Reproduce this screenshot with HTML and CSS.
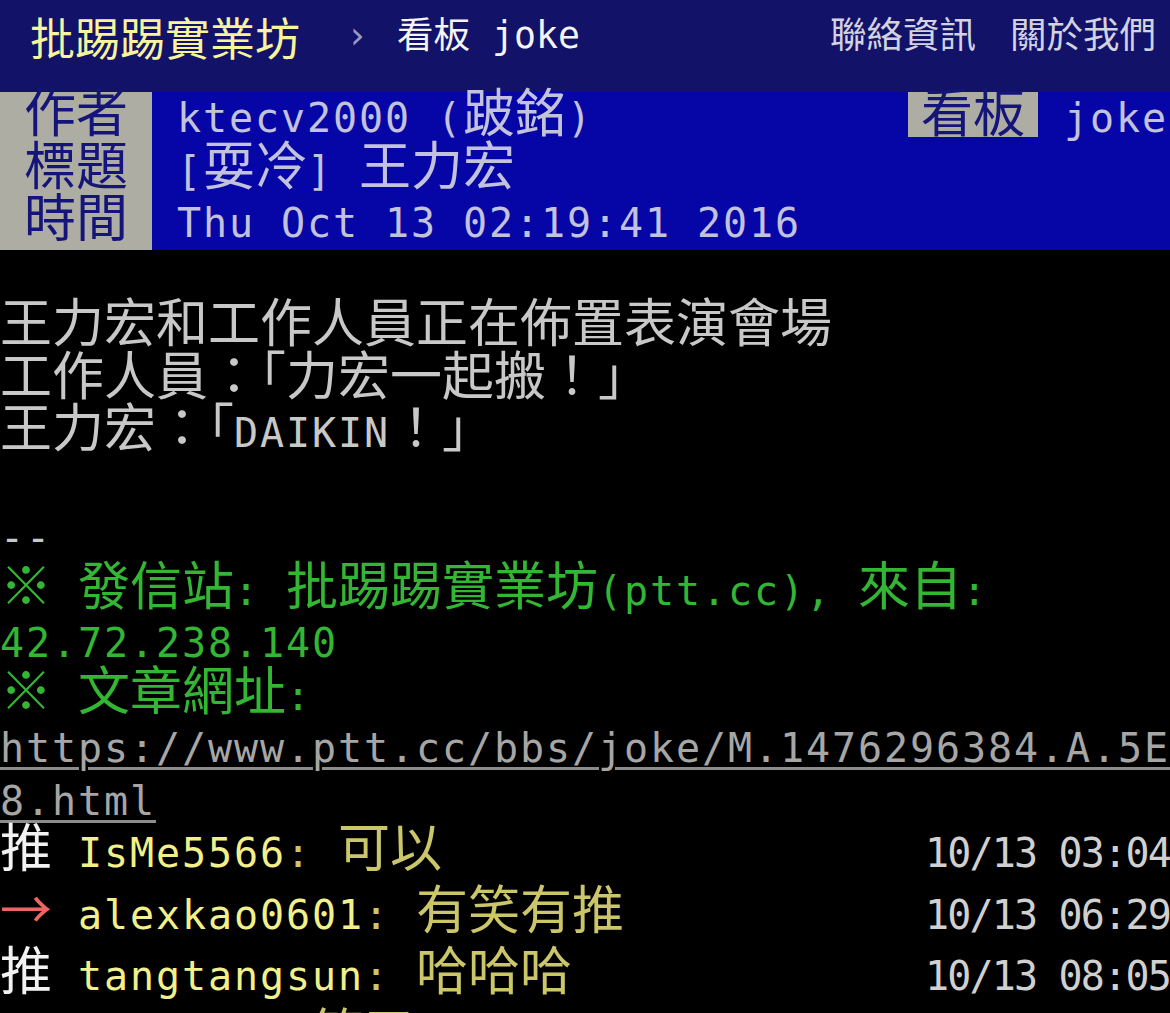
FILE: index.html
```html
<!DOCTYPE html>
<html lang="zh-Hant">
<head>
    <meta charset="UTF-8">
    <meta name="viewport" content="width=device-width, initial-scale=1.0">
    <title>[耍冷] 王力宏 - 看板 joke - 批踢踢實業坊</title>
    <link rel="stylesheet" href="styles.css">
</head>
<body>
    <div id="topbar">
        <a class="logo">批踢踢實業坊</a>
        <span class="sep">›</span>
        <a class="board">看板 joke</a>
        <div class="links">
            <a>聯絡資訊</a>
            <a>關於我們</a>
        </div>
    </div>

    <div id="main-content">
        <div class="article-meta">
            <div class="meta-tags">
                <div class="line"><span class="w">作者</span></div>
                <div class="line"><span class="w">標題</span></div>
                <div class="line"><span class="w">時間</span></div>
            </div>
            <div class="meta-values">
                <div class="line meta-first"><span>ktecv2000 (<span class="w">跛銘</span>)</span><span><span class="board-tag"><span class="w">看板</span></span> joke</span></div>
                <div class="line">[<span class="w">耍冷</span>] <span class="w">王力宏</span></div>
                <div class="line">Thu Oct 13 02:19:41 2016</div>
            </div>
        </div>

        <div class="article-body">
            <div class="line"></div>
            <div class="line"><span class="w">王力宏和工作人員正在佈置表演會場</span></div>
            <div class="line"><span class="w">工作人員：<span class="half">「</span>力宏一起搬！<span class="half">」</span></span></div>
            <div class="line"><span class="w">王力宏：<span class="half">「</span></span>DAIKIN<span class="w">！<span class="half">」</span></span></div>
            <div class="line"></div>
            <div class="line">--</div>
            <div class="line f2"><span class="w">※</span> <span class="w">發信站</span>: <span class="w">批踢踢實業坊</span>(ptt.cc), <span class="w">來自</span>:</div>
            <div class="line f2">42.72.238.140</div>
            <div class="line f2"><span class="w">※</span> <span class="w">文章網址</span>:</div>
            <div class="line"><a class="url">https://www.ptt.cc/bbs/joke/M.1476296384.A.5E</a></div>
            <div class="line"><a class="url">8.html</a></div>

            <div class="line push"><span class="push-tag"><span class="w">推</span> </span><span class="push-userid">IsMe5566</span><span class="push-content">: <span class="w">可以</span></span><span class="push-time">10/13 03:04</span></div>
            <div class="line push"><span class="push-tag arrow"><span class="w">→</span> </span><span class="push-userid">alexkao0601</span><span class="push-content">: <span class="w">有笑有推</span></span><span class="push-time">10/13 06:29</span></div>
            <div class="line push"><span class="push-tag"><span class="w">推</span> </span><span class="push-userid">tangtangsun</span><span class="push-content">: <span class="w">哈哈哈</span></span><span class="push-time">10/13 08:05</span></div>
            <div class="line push"><span class="push-tag arrow"><span class="w">→</span> </span><span class="push-userid">sanmaru</span><span class="push-content">: <span class="w">笑了</span></span><span class="push-time">10/13 09:12</span></div>
        </div>
    </div>
</body>
</html>
```

FILE: styles.css
```css
body {
    margin: 0;
    background-color: #000;
    height: 100vh;
    overflow: hidden;
}

#topbar {
    display: flex;
    align-items: center;
    height: 92px;
    box-sizing: border-box;
    padding: 0 14px 20px 30px;
    background-color: #121268;
    font-family: "DejaVu Sans Mono", "Noto Sans CJK TC", monospace;
    font-size: 36.5px;
    line-height: 1;
}
.logo {
    font-family: "Noto Sans CJK TC", sans-serif;
    font-size: 45px;
    color: #f7f49c;
}
.sep {
    margin-left: 46px;
    color: #9a9ac4;
}
.board {
    margin-left: 29px;
    color: #f4f4f4;
}
.links {
    margin-left: auto;
    display: flex;
    gap: 34px;
    color: #d2d2e0;
}

#main-content {
    font-family: "DejaVu Sans Mono", "Noto Sans CJK TC", monospace;
    font-size: 40px;
    letter-spacing: 1.92px;
    line-height: 52.5px;
    color: #c8c8c8;
}
.line {
    height: 52.5px;
    white-space: pre;
}
/* wide (two column) characters */
.w {
    font-family: "Noto Sans CJK TC", sans-serif;
    font-size: 52px;
    letter-spacing: 0;
    line-height: 0;
}
.half {
    font-feature-settings: "halt";
}

.article-meta {
    display: flex;
    background-color: #0606a6;
    color: #c2c2dc;
}
.meta-tags {
    width: 152px;
    box-sizing: border-box;
    padding-left: 24px;
    background-color: #aeada3;
    color: #14147a;
}
.meta-values {
    flex: 1;
    padding: 0 2px 0 25px;
}
.meta-first {
    display: flex;
    justify-content: space-between;
}
.board-tag {
    display: inline-block;
    height: 45px;
    padding: 0 13px;
    background-color: #aeada3;
    color: #14147a;
}

.f2 {
    color: #33b633;
}
.url {
    color: #a6a6a6;
    text-decoration: underline;
    text-decoration-color: #8c8c8c;
    text-decoration-thickness: 3px;
    text-underline-offset: 5px;
}

.push {
    display: flex;
    margin-bottom: 9px;
}
.push-tag {
    color: #f2f2f2;
}
.push-tag.arrow {
    color: #f06464;
}
.push-userid {
    color: #f2f08a;
}
.push-content {
    color: #cbc66a;
}
.push-time {
    margin-left: auto;
    color: #d0d0d0;
    letter-spacing: -1.8px;
}
```
